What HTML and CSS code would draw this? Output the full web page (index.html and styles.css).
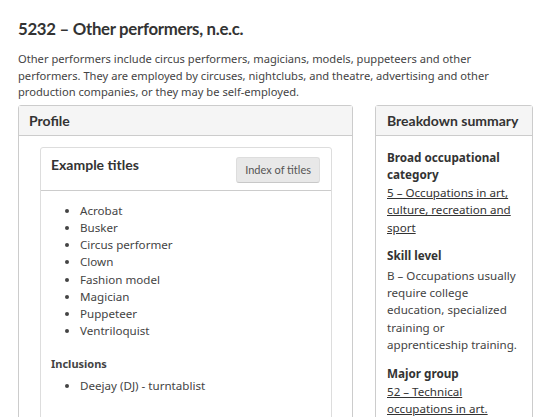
FILE: index.html
```html
<!DOCTYPE html>
<html lang="en">
<head>
<meta charset="utf-8">
<title>5232 – Other performers, n.e.c.</title>
<link rel="stylesheet" href="styles.css">
</head>
<body>
<main class="page">
  <h1 class="title">5232 – Other performers, n.e.c.</h1>
  <p class="lead">Other performers include circus performers, magicians, models, puppeteers and other performers. They are employed by circuses, nightclubs, and theatre, advertising and other production companies, or they may be self-employed.</p>
  <div class="layout">
    <section class="card profile">
      <h2 class="card-head">Profile</h2>
      <div class="card-body">
        <section class="inner">
          <div class="inner-head">
            <h3 class="inner-title">Example titles</h3>
            <button class="btn">Index of titles</button>
          </div>
          <div class="inner-body">
            <ul class="list">
              <li>Acrobat</li>
              <li>Busker</li>
              <li>Circus performer</li>
              <li>Clown</li>
              <li>Fashion model</li>
              <li>Magician</li>
              <li>Puppeteer</li>
              <li>Ventriloquist</li>
            </ul>
            <h4 class="sub">Inclusions</h4>
            <ul class="list">
              <li>Deejay (DJ) - turntablist</li>
            </ul>
          </div>
        </section>
      </div>
    </section>
    <aside class="card summary">
      <h2 class="card-head">Breakdown summary</h2>
      <dl class="sum-body">
        <dt>Broad occupational category</dt>
        <dd><a href="#">5 – Occupations in art, culture, recreation and sport</a></dd>
        <dt>Skill level</dt>
        <dd class="skill">B – Occupations usually require college education, specialized training or apprenticeship training.</dd>
        <dt>Major group</dt>
        <dd><a href="#">52 – Technical occupations in art.</a></dd>
      </dl>
    </aside>
  </div>
</main>
</body>
</html>
```
FILE: styles.css
```css
* { box-sizing: border-box; }
html, body { margin: 0; padding: 0; background: #fff; }
body {
  font-family: "Noto Sans", "Open Sans", sans-serif;
  color: #333;
  font-size: 12px;
}
.page { padding: 17px 3px 0 18px; }
.title {
  font-family: Lato, sans-serif;
  font-weight: 700;
  font-size: 16.8px;
  letter-spacing: -0.3px;
  line-height: 24px;
  margin: 0 0 10px;
  color: #333;
}
.lead {
  margin: 0 0 4px;
  font-size: 11.15px;
  line-height: 16.6px;
  color: #444;
}
.layout {
  display: grid;
  grid-template-columns: 335px 158px;
  column-gap: 22px;
  align-items: start;
}
.card {
  border: 1px solid #ccc;
  border-radius: 3px;
  background: #fff;
  height: 330px;
}
.card-head {
  margin: 0;
  background: #f5f5f5;
  border-bottom: 1px solid #ccc;
  font-family: Lato, sans-serif;
  font-weight: 700;
  font-size: 14px;
  line-height: 29px;
  padding: 0 10px;
  color: #333;
}
.summary .card-head { padding: 0 11px; }
.card-body { padding: 11px 20px 0 21px; }
.inner {
  border: 1px solid #ddd;
  border-radius: 3px;
  height: 300px;
}
.inner-head {
  display: flex;
  justify-content: space-between;
  align-items: flex-start;
  padding: 8px 11px 7px 10px;
  border-bottom: 1px solid #ccc;
}
.inner-title {
  margin: 0;
  font-family: Lato, sans-serif;
  font-weight: 700;
  font-size: 14px;
  line-height: 18px;
  color: #333;
}
.btn {
  font-family: Lato, sans-serif;
  font-size: 11px;
  color: #555;
  background: #e8e8e8;
  border: 1px solid #ddd;
  border-bottom-color: #c8c8c8;
  border-radius: 3px;
  padding: 0 8px;
  height: 26px;
  margin-top: 1px;
}
.inner-body { padding: 11px 10px 0 10px; }
.list {
  margin: 0;
  padding-left: 29px;
  font-size: 11.6px;
  line-height: 17.2px;
  color: #444;
}
.sub {
  margin: 18px 0 6px;
  font-size: 11px;
  font-weight: 700;
  line-height: 14px;
  color: #444;
}
.sum-body {
  margin: 0;
  padding: 13px 10px 0 11px;
  font-size: 11.6px;
  line-height: 17.2px;
}
.sum-body dt {
  font-weight: 700;
  font-size: 11.7px;
  color: #333;
  margin-bottom: 1px;
}
.sum-body dd {
  margin: 0 0 11px;
  color: #444;
}
.sum-body dd.skill { margin-top: 3px; margin-bottom: 12px; }
.sum-body a { color: #333; text-decoration: underline; }
```
